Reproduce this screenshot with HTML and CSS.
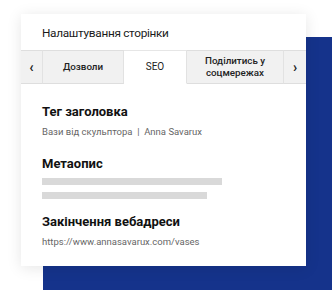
FILE: index.html
```html
<!DOCTYPE html>
<html lang="uk">
<head>
<meta charset="utf-8">
<link rel="stylesheet" href="styles.css">
</head>
<body>
<div class="stage">
  <div class="backdrop"></div>
  <div class="card">
    <div class="card-title">Налаштування сторінки</div>
    <div class="tabs">
      <div class="tab arrow">&#8249;</div>
      <div class="tab t1">Дозволи</div>
      <div class="tab t2 active">SEO</div>
      <div class="tab t3">Поділитись у<br>соцмережах</div>
      <div class="tab arrow">&#8250;</div>
    </div>
    <div class="content">
      <div class="label">Тег заголовка</div>
      <div class="value">Вази від скульптора&nbsp; |&nbsp; Anna Savarux</div>
      <div class="label l2">Метаопис</div>
      <div class="bar b1"></div>
      <div class="bar b2"></div>
      <div class="label l3">Закінчення вебадреси</div>
      <div class="value">https://www.annasavarux.com/vases</div>
    </div>
  </div>
</div>
</body>
</html>
```
FILE: styles.css
```css
html, body { margin: 0; padding: 0; background: #fff; }
body { width: 332px; height: 295px; overflow: hidden; font-family: Roboto, "Noto Sans", sans-serif; color: #111; }
.stage { position: relative; width: 332px; height: 295px; padding: 14px 0 0 21px; box-sizing: border-box; }
.backdrop { position: absolute; left: 43px; top: 37px; width: 289px; height: 253px; background: #15338b; }
.card { position: relative; width: 285px; height: 252px; background: #fff; box-shadow: 0 2px 14px rgba(0,0,0,0.10); display: flex; flex-direction: column; }
.card-title { height: 36px; box-sizing: border-box; padding: 10px 0 0 21px; font-size: 11.8px; letter-spacing: -0.3px; line-height: 18px; color: #1a1a1a; }
.tabs { display: flex; height: 34px; }
.tab { background: #f1f1f1; border-top: 1px solid #dedede; border-bottom: 1px solid #dedede; border-right: 1px solid #e2e2e2; box-sizing: border-box; display: flex; align-items: center; justify-content: center; text-align: center; font-size: 9.8px; line-height: 12px; font-weight: 500; color: #222; }
.arrow { width: 22px; font-size: 14px; font-weight: 700; }
.tab:last-child { border-right: none; }
.t1 { width: 81px; }
.t2 { width: 63px; }
.t3 { width: 97px; }
.active { background: #fff; border-bottom-color: #fff; border-top-color: #e6e6e6; font-weight: 400; font-size: 10px; }
.content { padding: 19px 0 0 21px; }
.label { font-size: 13px; font-weight: 700; line-height: 18px; color: #111; }
.value { margin-top: 5px; font-size: 9.5px; line-height: 12px; color: #666; }
.l2 { margin-top: 17px; }
.bar { height: 7px; background: #d9d9d9; }
.b1 { margin-top: 5px; width: 180px; }
.b2 { margin-top: 7px; width: 165px; }
.l3 { margin-top: 14px; }
```
